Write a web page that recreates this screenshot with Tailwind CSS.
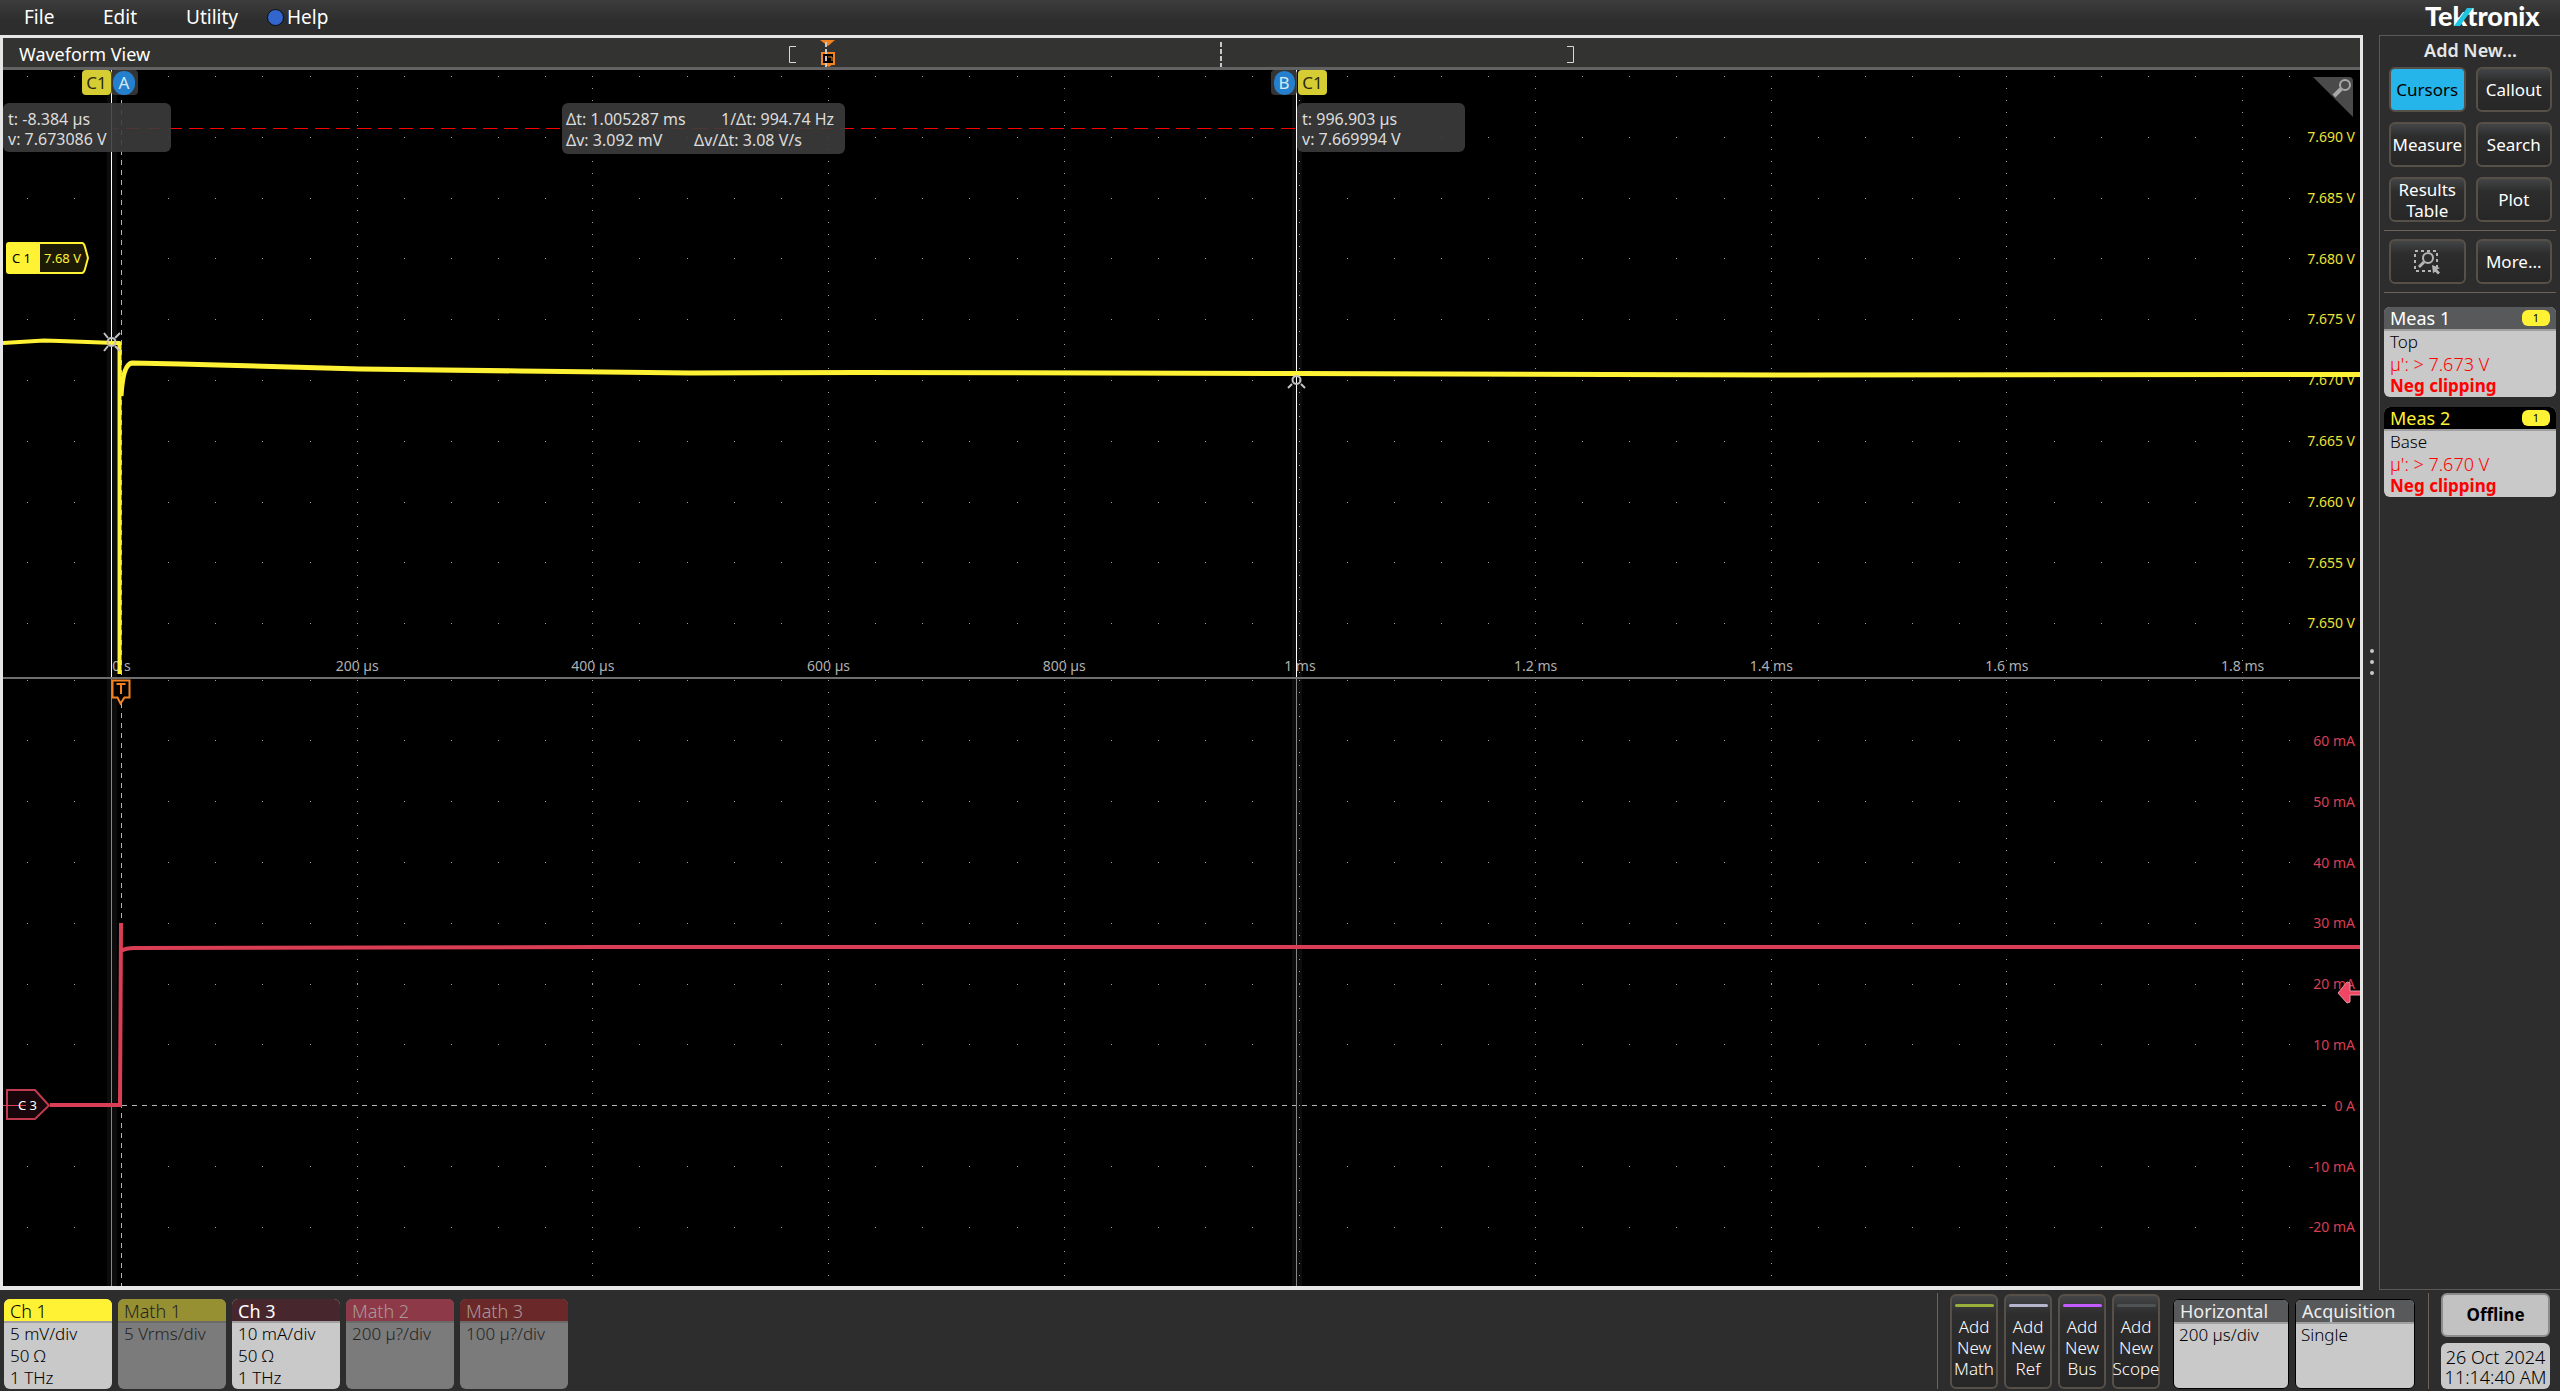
<!DOCTYPE html>
<html lang="en">
<head>
<meta charset="utf-8">
<title>Waveform View</title>
<script src="https://cdn.jsdelivr.net/npm/@tailwindcss/browser@4"></script>
</head>
<body class="flex h-screen flex-col overflow-hidden bg-[#2d2d2d] font-['Noto_Sans',sans-serif] text-white">

<header class="flex h-[35px] shrink-0 items-center justify-between bg-linear-to-b from-[#3d3d3d] to-[#2d2d2d] to-60%">
  <nav class="flex h-full items-center pl-6 text-[19px]">
    <button type="button" class="w-[79px] text-left">File</button>
    <button type="button" class="w-[83px] text-left">Edit</button>
    <button type="button" class="w-[81px] text-left">Utility</button>
    <button type="button" class="flex items-center gap-[3px]"><span class="size-[17px] rounded-full border border-[#0b0b0b] bg-[#3366cc]"></span>Help</button>
  </nav>
  <svg class="mr-3 h-full w-[124px]" viewBox="0 0 124 35" role="img" aria-label="Tektronix">
    <text x="1" y="26" font-family="Lato,sans-serif" font-size="27" font-weight="900" fill="#fff">Tektronix</text>
    <path d="M30 26L43 8H49L36 26Z" fill="#1fc4e0"/>
  </svg>
</header>

<div class="flex min-h-0 flex-1">
  <main class="flex min-w-0 flex-1 flex-col border-3 border-b-4 border-[#e6e6e6]">
    <div class="relative flex h-8 shrink-0 items-center border-b-3 border-[#636363] bg-[#333331] pt-1 pl-4">
      <h1 class="text-[18px]">Waveform View</h1>
      <svg class="absolute inset-0 h-full w-full" viewBox="0 0 2357 29" preserveAspectRatio="none" fill="none">
        <path d="M793 8.500h-6.500v16h6.500M1564 8.500h6.500v16h-6.500" stroke="#d8d8d8"/>
        <path d="M1218 4v25" stroke="#c8c8c8" stroke-width="2" stroke-dasharray="5 2"/>
        <rect x="819" y="15" width="12" height="11" fill="#000" stroke="#f58220" stroke-width="2"/>
        <path d="M817 2h15l-7 6z" fill="#f58220"/>
        <path d="M821 26h9l-4 3z" fill="#f58220"/>
        <path d="M823 4v25" stroke="#c8c8c8" stroke-width="2" stroke-dasharray="5 2"/>
        <path d="M825 19h4v4" stroke="#f58220"/>
      </svg>
    </div>

    <section class="relative min-h-0 flex-1 bg-black" aria-label="Waveforms">
      <svg id="plot" class="h-full w-full" viewBox="3 70 2357 1216" preserveAspectRatio="none" font-family="'Noto Sans',sans-serif" font-size="14" fill="none">
        <rect x="107" y="70" width="10" height="1216" fill="#0c0c0c"/>
        <rect x="1292" y="70" width="10" height="1216" fill="#0c0c0c"/>
        <g id="grid" fill="#a0a0a0"></g>
        <g id="labels"></g>
        <path d="M3 678H2360" stroke="#6e6e6e" stroke-width="2"/>
        <path d="M121.500 100V676M121.500 703V1286" stroke="#b4b4b4" stroke-dasharray="5 5"/>
        <path d="M122 1105.500H2326" stroke="#b4b4b4" stroke-dasharray="5 5"/>
        <path d="M113 128.500H1296" stroke="#f00" stroke-dasharray="14 7" stroke-dashoffset="8"/>
        <path d="M111.500 70V677M1296.500 70V677" stroke="#fff"/>
        <path d="M111.500 679V1286M1296.500 679V1286" stroke="#858585"/>
        <g stroke="#fff133" stroke-width="5" stroke-linejoin="round">
          <path d="M3 343L44 340.500L60 341L115 343H119.500V674" stroke-width="4"/>
          <path d="M121 396Q123 364 132 363L180 364L360 369L520 371L690 373L860 372.500L1300 373.500L1800 375L2360 374.500"/>
        </g>
        <g stroke="#c4c4c4" stroke-width="2">
          <circle cx="111.500" cy="342" r="4"/>
          <path d="M104 333l4 5M120 333l-5 5M104 351l4-5M120 351l-5-5"/>
          <circle cx="1296.500" cy="380" r="4"/>
          <path d="M1288 388l4-4M1305 388l-4-4"/>
        </g>
        <g stroke="#d93e55" stroke-width="4">
          <path d="M50 1105H120L121 923M121 951Q126 948 134 948L600 947H2360"/>
        </g>
        <path d="M112.500 680.500h17v17h-5l-4 6l-3-6h-5z" fill="#000" stroke="#f58220" stroke-width="2"/>
        <path d="M116.500 684h9M121 684v10" stroke="#f58220" stroke-width="2"/>
        <path d="M7 1090h28l14 15.500L35 1119H7z" fill="#18060a" stroke="#c03a50" stroke-width="2"/>
        <path d="M3 1105.500H26" stroke="#d93e55"/>
        <text x="18" y="1110" font-size="13" fill="#fff">C 3</text>
        <rect x="6" y="242" width="34" height="32" rx="3" fill="#fff133"/>
        <path d="M39 243h43q2 0 3 4l3 11l-3 11q-1 4-3 4H39z" fill="#1c1a05" stroke="#fff133" stroke-width="2"/>
        <text x="12" y="263" font-size="13" fill="#000">C 1</text>
        <text x="44" y="263" font-size="13" fill="#fff133">7.68 V</text>
        <path d="M2360 991h-10v-8l-3-1l-9 11l9 10l3-1v-7h10" fill="#ef4763" stroke="#e8909e"/>
        <path d="M2313 77h36q4 0 4 4v36z" fill="#4a4a4a"/>
        <circle cx="2345" cy="85" r="5" stroke="#a8a8a8" stroke-width="2"/>
        <path d="M2341 89l-7 7" stroke="#a8a8a8" stroke-width="4"/>
      </svg>

      <div class="absolute left-[79px] top-0 flex h-[25px] items-center text-[17px]">
        <span class="flex h-full w-[29px] items-center justify-center rounded bg-[#d6cd35] text-[#2a2a10]">C1</span>
        <span class="flex h-full w-[27px] items-center rounded bg-[#3a3a3a]/90 pl-[2px]"><span class="flex h-6 w-[22px] items-center justify-center rounded-full bg-[#2480cc] text-[#d8e8f4]">A</span></span>
      </div>
      <div class="absolute left-[1268px] top-0 flex h-[25px] items-center gap-px text-[17px]">
        <span class="flex h-full w-[26px] items-center justify-center rounded bg-[#3a3a3a]/90"><span class="flex h-6 w-[21px] items-center justify-center rounded-full bg-[#2480cc] text-[#d8e8f4]">B</span></span>
        <span class="flex h-full w-[29px] items-center justify-center rounded bg-[#d6cd35] text-[#2a2a10]">C1</span>
      </div>
      <div class="absolute left-0 top-[33px] h-[49px] w-[168px] rounded-md bg-[#3c3c3c]/90 py-[6px] pl-[5px] text-[16px] leading-5 text-[#dcdcdc]"><p>t: -8.384 µs</p><p>v: 7.673086 V</p></div>
      <div class="absolute left-[559px] top-[33px] h-[51px] w-[283px] rounded-md bg-[#3c3c3c]/90 py-[6px] pl-1 text-[16px] leading-[21px] text-[#dcdcdc]">
        <p class="flex"><span class="w-[155px]">Δt: 1.005287 ms</span><span>1/Δt: 994.74 Hz</span></p>
        <p class="flex"><span class="w-[128px]">Δv: 3.092 mV</span><span>Δv/Δt: 3.08 V/s</span></p>
      </div>
      <div class="absolute left-[1294px] top-[33px] h-[49px] w-[168px] rounded-md bg-[#3c3c3c]/90 py-[6px] pl-[5px] text-[16px] leading-5 text-[#dcdcdc]"><p>t: 996.903 µs</p><p>v: 7.669994 V</p></div>
    </section>
  </main>

  <div class="flex w-4 flex-col items-center justify-center gap-[7px] pb-[2px] pl-px">
    <span class="size-1 rounded-full bg-[#c8c8c8]"></span><span class="size-1 rounded-full bg-[#c8c8c8]"></span><span class="size-1 rounded-full bg-[#c8c8c8]"></span>
  </div>

  <aside class="w-[181px] shrink-0 border-y border-l border-[#5c5856] px-1 text-[17px] leading-[21px]">
    <h2 class="pl-px text-center text-[18px] font-semibold leading-[28px] text-[#e6e6e6]">Add New...</h2>
    <div class="mt-[3px] grid grid-cols-2 gap-[10px] pl-[5px] pr-1">
      <button type="button" class="h-[45px] rounded-md border-2 border-[#575048] bg-[#26b5ea] text-black">Cursors</button>
      <button type="button" class="h-[45px] rounded-md border-2 border-[#575048] bg-linear-to-b from-[#434547] via-[#2d2d2d] via-30% to-[#272727]">Callout</button>
      <button type="button" class="h-[45px] rounded-md border-2 border-[#575048] bg-linear-to-b from-[#434547] via-[#2d2d2d] via-30% to-[#272727]">Measure</button>
      <button type="button" class="h-[45px] rounded-md border-2 border-[#575048] bg-linear-to-b from-[#434547] via-[#2d2d2d] via-30% to-[#272727]">Search</button>
      <button type="button" class="h-[45px] rounded-md border-2 border-[#575048] bg-linear-to-b from-[#434547] via-[#2d2d2d] via-30% to-[#272727]">Results<br>Table</button>
      <button type="button" class="h-[45px] rounded-md border-2 border-[#575048] bg-linear-to-b from-[#434547] via-[#2d2d2d] via-30% to-[#272727]">Plot</button>
    </div>
    <hr class="my-[8px] border-[#6e6259]">
    <div class="grid grid-cols-2 gap-[10px] pl-[5px] pr-1">
      <button type="button" aria-label="Zoom to area" class="flex h-[45px] items-center justify-center rounded-md border-2 border-[#575048] bg-linear-to-b from-[#434547] via-[#2d2d2d] via-30% to-[#272727]">
        <svg class="h-[26px] w-7" viewBox="0 0 28 26" fill="none" stroke="#b4b4b4" stroke-width="2">
          <path d="M2 2h22v20h-22z" stroke-dasharray="3 3"/>
          <circle cx="15" cy="9" r="5"/><path d="M11 13l-5 5" stroke-width="3"/>
          <path d="M19 16l8 3-3 1.500 3 3-2 2-3-3-2 2z" fill="#b4b4b4" stroke="none"/>
        </svg>
      </button>
      <button type="button" class="h-[45px] rounded-md border-2 border-[#575048] bg-linear-to-b from-[#434547] via-[#2d2d2d] via-30% to-[#272727]">More...</button>
    </div>
    <hr class="mt-[8px] mb-[14px] border-[#6e6259]">
    <section class="mb-[10px] h-[90px] overflow-hidden rounded-md bg-[#c9c9c9] leading-[22px] text-[#f00]">
      <h3 class="flex h-6 items-center justify-between border-b-2 border-[#a0a0a0] bg-[#58595b] pl-[6px] pr-[6px] text-[18px] text-white">Meas 1<span class="h-4 w-7 rounded-md bg-[#fff133] text-center text-[11px] leading-4 text-black">1</span></h3>
      <p class="pl-[6px] font-light text-black">Top</p><p class="pl-[6px] text-[18px] font-light">µ': &gt; 7.673 V</p><p class="pl-[6px] font-bold">Neg clipping</p>
    </section>
    <section class="h-[90px] overflow-hidden rounded-md bg-[#c9c9c9] leading-[22px] text-[#f00]">
      <h3 class="flex h-6 items-center justify-between border-b-2 border-[#a0a0a0] bg-black pl-[6px] pr-[6px] text-[18px] text-[#fff133]">Meas 2<span class="h-4 w-7 rounded-md bg-[#fff133] text-center text-[11px] leading-4 text-black">1</span></h3>
      <p class="pl-[6px] font-light text-black">Base</p><p class="pl-[6px] text-[18px] font-light">µ': &gt; 7.670 V</p><p class="pl-[6px] font-bold">Neg clipping</p>
    </section>
  </aside>
</div>

<footer class="flex h-[101px] shrink-0 items-end justify-between pl-1 pr-[10px] pb-[2px] text-[17px] leading-[22px]">
  <div class="flex gap-[6px] font-light text-black">
    <section class="h-[90px] w-[108px] overflow-hidden rounded-md bg-[#c9c9c9]"><h3 class="h-6 border-b-2 border-[#a0a0a0] bg-[#fff133] pt-px pl-[6px] text-[18px]">Ch 1</h3><p class="pl-[6px]">5 mV/div</p><p class="pl-[6px]">50 Ω</p><p class="pl-[6px]">1 THz</p></section>
    <section class="h-[90px] w-[108px] overflow-hidden rounded-md bg-[#7b7b7b] text-[#242424]"><h3 class="h-6 border-b-2 border-[#6a6a6a] bg-[#969033] pt-px pl-[6px] text-[18px]">Math 1</h3><p class="pl-[6px]">5 Vrms/div</p></section>
    <section class="h-[90px] w-[108px] overflow-hidden rounded-md bg-[#c9c9c9]"><h3 class="h-6 border-b-2 border-[#a0a0a0] bg-[#48262d] pt-px pl-[6px] text-[18px] font-normal text-white">Ch 3</h3><p class="pl-[6px]">10 mA/div</p><p class="pl-[6px]">50 Ω</p><p class="pl-[6px]">1 THz</p></section>
    <section class="h-[90px] w-[108px] overflow-hidden rounded-md bg-[#7b7b7b] text-[#242424]"><h3 class="h-6 border-b-2 border-[#6a6a6a] bg-[#8d3948] pt-px pl-[6px] text-[18px] text-[#a99]">Math 2</h3><p class="pl-[6px]">200 µ?/div</p></section>
    <section class="h-[90px] w-[108px] overflow-hidden rounded-md bg-[#7b7b7b] text-[#242424]"><h3 class="h-6 border-b-2 border-[#6a6a6a] bg-[#6b2829] pt-px pl-[6px] text-[18px] text-[#a99]">Math 3</h3><p class="pl-[6px]">100 µ?/div</p></section>
  </div>
  <div class="flex items-end font-light">
    <div class="mr-3 h-24 w-px bg-[#6e6259]"></div>
    <div class="mr-[13px] flex gap-[6px] leading-[21px]">
      <button type="button" class="flex h-[95px] w-12 flex-col items-center rounded-md border-2 border-[#575048] bg-linear-to-b from-[#434547] via-[#2d2d2d] via-20% to-[#272727] pt-2"><span class="mb-[9px] h-[3px] w-[39px] rounded bg-[#98b03a]"></span><span>Add<br>New<br>Math</span></button>
      <button type="button" class="flex h-[95px] w-12 flex-col items-center rounded-md border-2 border-[#575048] bg-linear-to-b from-[#434547] via-[#2d2d2d] via-20% to-[#272727] pt-2"><span class="mb-[9px] h-[3px] w-[39px] rounded bg-[#b4b4cc]"></span><span>Add<br>New<br>Ref</span></button>
      <button type="button" class="flex h-[95px] w-12 flex-col items-center rounded-md border-2 border-[#575048] bg-linear-to-b from-[#434547] via-[#2d2d2d] via-20% to-[#272727] pt-2"><span class="mb-[9px] h-[3px] w-[39px] rounded bg-[#c25cff]"></span><span>Add<br>New<br>Bus</span></button>
      <button type="button" class="flex h-[95px] w-12 flex-col items-center rounded-md border-2 border-[#575048] bg-linear-to-b from-[#434547] via-[#2d2d2d] via-20% to-[#272727] pt-2"><span class="mb-[9px] h-[3px] w-[39px] rounded bg-[#505354]"></span><span>Add<br>New<br>Scope</span></button>
    </div>
    <section class="mr-[6px] h-[90px] w-[116px] overflow-hidden rounded-md border border-black bg-[#c9c9c9] text-black"><h3 class="h-6 border-b-2 border-[#a0a0a0] bg-[#58595b] pl-[6px] text-[18px] font-normal text-[#eee]">Horizontal</h3><p class="pl-[5px]">200 µs/div</p></section>
    <section class="mr-[13px] h-[90px] w-[120px] overflow-hidden rounded-md border border-black bg-[#c9c9c9] text-black"><h3 class="h-6 border-b-2 border-[#a0a0a0] bg-[#58595b] pl-[6px] text-[18px] font-normal text-[#eee]">Acquisition</h3><p class="pl-[5px]">Single</p></section>
    <div class="mr-3 h-24 w-px bg-[#6e6259]"></div>
    <div class="flex flex-col gap-[6px] text-black">
      <button type="button" class="h-11 w-[109px] rounded-md border-2 border-[#8c8c8c] bg-[#c2c2c2] font-bold">Offline</button>
      <p class="h-[46px] w-[109px] rounded-md bg-[#c9c9c9] pt-1 text-center text-[18px] leading-5">26 Oct 2024<br>11:14:40 AM</p>
    </div>
  </div>
</footer>

<script>
  const NS = 'http://www.w3.org/2000/svg';
  const grid = document.getElementById('grid');
  const labels = document.getElementById('labels');
  const X0 = 121.5, DX = 235.68;
  function dot(x, y) {
    const r = document.createElementNS(NS, 'rect');
    r.setAttribute('x', Math.floor(x)); r.setAttribute('y', Math.round(y));
    r.setAttribute('width', 1); r.setAttribute('height', 1);
    grid.appendChild(r);
  }
  function label(x, y, text, fill, anchor) {
    const t = document.createElementNS(NS, 'text');
    t.setAttribute('x', x); t.setAttribute('y', y);
    t.setAttribute('fill', fill); t.setAttribute('text-anchor', anchor);
    t.textContent = text;
    labels.appendChild(t);
  }
  // Graticule of one pane: rows of minor columns plus finely dotted major columns
  function pane(y0, rows, dy, bottom) {
    for (let r = 0; r < rows; r++)
      for (let i = -2; i <= 46; i++)
        if (i !== 0) dot(X0 + i * DX / 5, y0 + r * dy);
    for (let m = 1; m <= 9; m++)
      for (let y = y0; y < bottom; y += dy / 5) dot(X0 + m * DX, y);
  }
  pane(76, 10, 60.8, 674);
  pane(679.5, 10, 60.8, 1284);
  ['0 s', '200 µs', '400 µs', '600 µs', '800 µs', '1 ms', '1.2 ms', '1.4 ms', '1.6 ms', '1.8 ms']
    .forEach((s, i) => label(X0 + i * DX, 671, s, '#b0b0b0', 'middle'));
  for (let i = 0; i < 9; i++)
    label(2355, Math.round(142 + i * 60.8), (7.69 - i * 0.005).toFixed(3) + ' V', '#ece335', 'end');
  for (let i = 0; i < 9; i++) {
    const v = 60 - i * 10;
    label(2355, Math.round(746 + i * 60.8), v ? v + ' mA' : '0 A', '#d93e55', 'end');
  }
</script>
</body>
</html>
